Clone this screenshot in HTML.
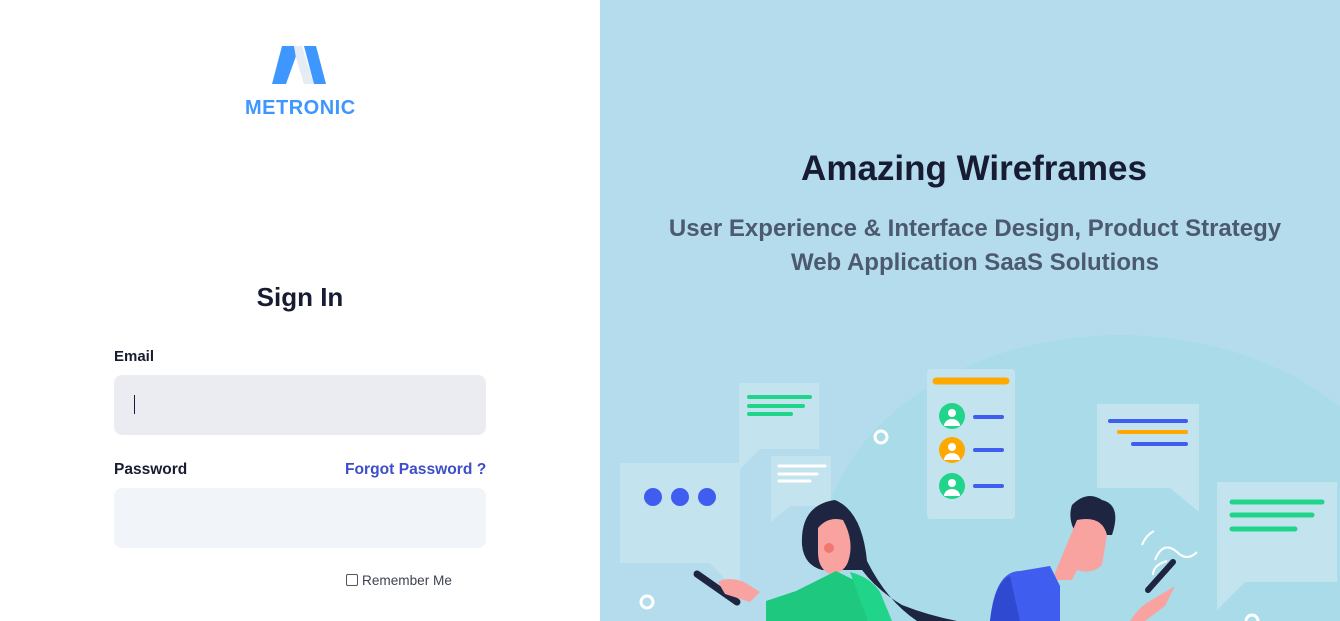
<!DOCTYPE html>
<html><head><meta charset="utf-8"><style>
*{margin:0;padding:0;box-sizing:border-box}
html,body{width:1340px;height:621px;overflow:hidden}
body{font-family:"Liberation Sans",sans-serif;background:#fff;position:relative}
.left{position:absolute;left:0;top:0;width:600px;height:621px;background:#fff}
.right{position:absolute;left:600px;top:0;width:740px;height:621px;background:#b4dcec;overflow:hidden}
.logo{position:absolute;left:245px;top:97px;font-weight:bold;font-size:20px;color:#3e97ff;letter-spacing:.5px}
h1{position:absolute;left:0;width:600px;text-align:center;top:282px;font-size:26px;font-weight:600;color:#181c32}
.lbl{position:absolute;font-size:15px;font-weight:600;color:#181c32}
.inp{position:absolute;left:114px;width:372px;height:60px;border-radius:8px}
.h2{position:absolute;left:0;width:748px;text-align:center;top:149px;font-size:35px;font-weight:600;color:#181c32}
.sub{position:absolute;left:0;width:750px;text-align:center;top:212px;font-size:24px;font-weight:600;color:#4b5a6e;line-height:34px}
</style></head><body>
<div class="left">
<svg style="position:absolute;left:270px;top:44px" width="58" height="42" viewBox="0 0 58 42">
<polygon points="12,2 24,2 26,12 16,40 2,40" fill="#3e97ff"/>
<polygon points="24,2 32,2 44,40 34,40 26,14" fill="#e6ecf4"/>
<polygon points="34,2 46,2 56,40 44,40" fill="#3e97ff"/>
</svg>
<div class="logo">METRONIC</div>
<h1>Sign In</h1>
<div class="lbl" style="left:114px;top:348px">Email</div>
<div class="inp" style="top:375px;background:#eaecf1"></div>
<div style="position:absolute;left:134px;top:395px;width:1px;height:19px;background:#181c32"></div>
<div class="lbl" style="left:114px;top:461px;font-size:15.5px">Password</div>
<div class="lbl" style="left:345px;top:461px;color:#3e4dc8;font-size:15.6px">Forgot Password ?</div>
<div class="inp" style="top:488px;background:#f1f4f8"></div>
<div style="position:absolute;left:346px;top:574px;width:12px;height:12px;border:1px solid #555;border-radius:2px"></div>
<div style="position:absolute;left:362px;top:573px;font-size:13.6px;color:#3f4254">Remember Me</div>
</div>
<div class="right">
<div class="h2">Amazing Wireframes</div>
<div class="sub">User Experience &amp; Interface Design, Product Strategy<br>Web Application SaaS Solutions</div>
<svg style="position:absolute;left:0;top:0;display:block" width="740" height="621" viewBox="600 0 740 621">
<ellipse cx="1120" cy="560" rx="300" ry="225" fill="#a9dce8"/>
<g fill="#c3e4ef">
<rect x="739" y="383" width="80" height="66"/><polygon points="739,449 760,449 739,470"/>
<rect x="771" y="456" width="60" height="50"/><polygon points="771,506 790,506 771,522"/>
<rect x="620" y="463" width="120" height="100"/><polygon points="710,563 740,563 740,595"/>
<rect x="927" y="369" width="88" height="150" rx="4"/>
<rect x="1097" y="404" width="102" height="84"/><polygon points="1170,488 1199,488 1199,512"/>
<rect x="1217" y="482" width="120" height="100"/><polygon points="1217,582 1245,582 1217,610"/>
</g>
<g stroke-linecap="round" stroke-width="4">
<path d="M749 397H810M749 406H803M749 414H791" stroke="#20d489"/>
<path d="M779 466H825M779 474H817M779 481H810" stroke="#fff" stroke-width="3"/>
<path d="M936 381H1006" stroke="#ffa800" stroke-width="7"/>
<path d="M975 417H1002M975 450H1002M975 486H1002" stroke="#3f5ef0"/>
<path d="M1110 421H1186M1133 444H1186" stroke-width="4" stroke="#3f5ef0"/>
<path d="M1119 432H1186" stroke="#ffa800"/>
<path d="M1232 502H1322M1232 515H1312M1232 529H1295" stroke="#20d489" stroke-width="5"/>
</g>
<circle cx="653" cy="497" r="9" fill="#3f5ef0"/><circle cx="680" cy="497" r="9" fill="#3f5ef0"/><circle cx="707" cy="497" r="9" fill="#3f5ef0"/>
<circle cx="952" cy="416" r="13" fill="#20d489"/><circle cx="952" cy="450" r="13" fill="#ffa800"/><circle cx="952" cy="486" r="13" fill="#20d489"/>
<g fill="#fff"><circle cx="952" cy="413" r="4"/><circle cx="952" cy="447" r="4"/><circle cx="952" cy="483" r="4"/>
<path d="M944 426a8 7 0 0116 0zM944 460a8 7 0 0116 0zM944 496a8 7 0 0116 0z"/></g>
<g fill="none" stroke="#fff" stroke-width="3"><circle cx="881" cy="437" r="6"/><circle cx="647" cy="602" r="6"/><circle cx="1252" cy="621" r="6"/>
<path d="M1142 545q4-10 12-14M1155 560q8-20 22-8q10 10 20 0M1153 575q0-10 14-14" stroke-width="2"/></g>
<path d="M835 500q-35 5-33 45q2 20 20 25l40 0q15 20 40 35q25 10 55 16h-40q-30-20-50-60q-5-50-32-61z" fill="#1e2540"/>
<path d="M818 528q10-12 25-8q12 22 5 42q-5 12-18 12q-12-5-12-22z" fill="#f9a3a0"/>
<circle cx="829" cy="548" r="5" fill="#f2776f"/>
<path d="M766 621l0-20 30-10 40-20 20 10 12 40z" fill="#1ec97f"/>
<path d="M850 572q20 5 30 20l12 29h-24z" fill="#20d489"/>
<path d="M697 574l40 28" stroke="#1e2540" stroke-width="7" stroke-linecap="round"/>
<path d="M718 582q10-6 26 0l16 10-10 10-25-8z" fill="#f9a3a0"/>
<path d="M1072 505q15-15 30-5q20 5 10 35l-35 0q-10-15-5-30z" fill="#1e2540"/>
<path d="M1077 520q25-5 30 15l-5 30q-10 10-25 5l-5 10-20 0z" fill="#f9a3a0"/>
<path d="M990 621q5-50 30-50l30-5 10 20 0 35z" fill="#3f5ef0"/>
<path d="M990 621q5-40 20-45l10 45z" fill="#2f49d1"/>
<path d="M1130 621q10-15 20-20l25-15-10 20-20 15z" fill="#f9a3a0"/>
<path d="M1148 590l25-28" stroke="#1e2540" stroke-width="6" stroke-linecap="round"/>
</svg>
</div>
</body></html>
